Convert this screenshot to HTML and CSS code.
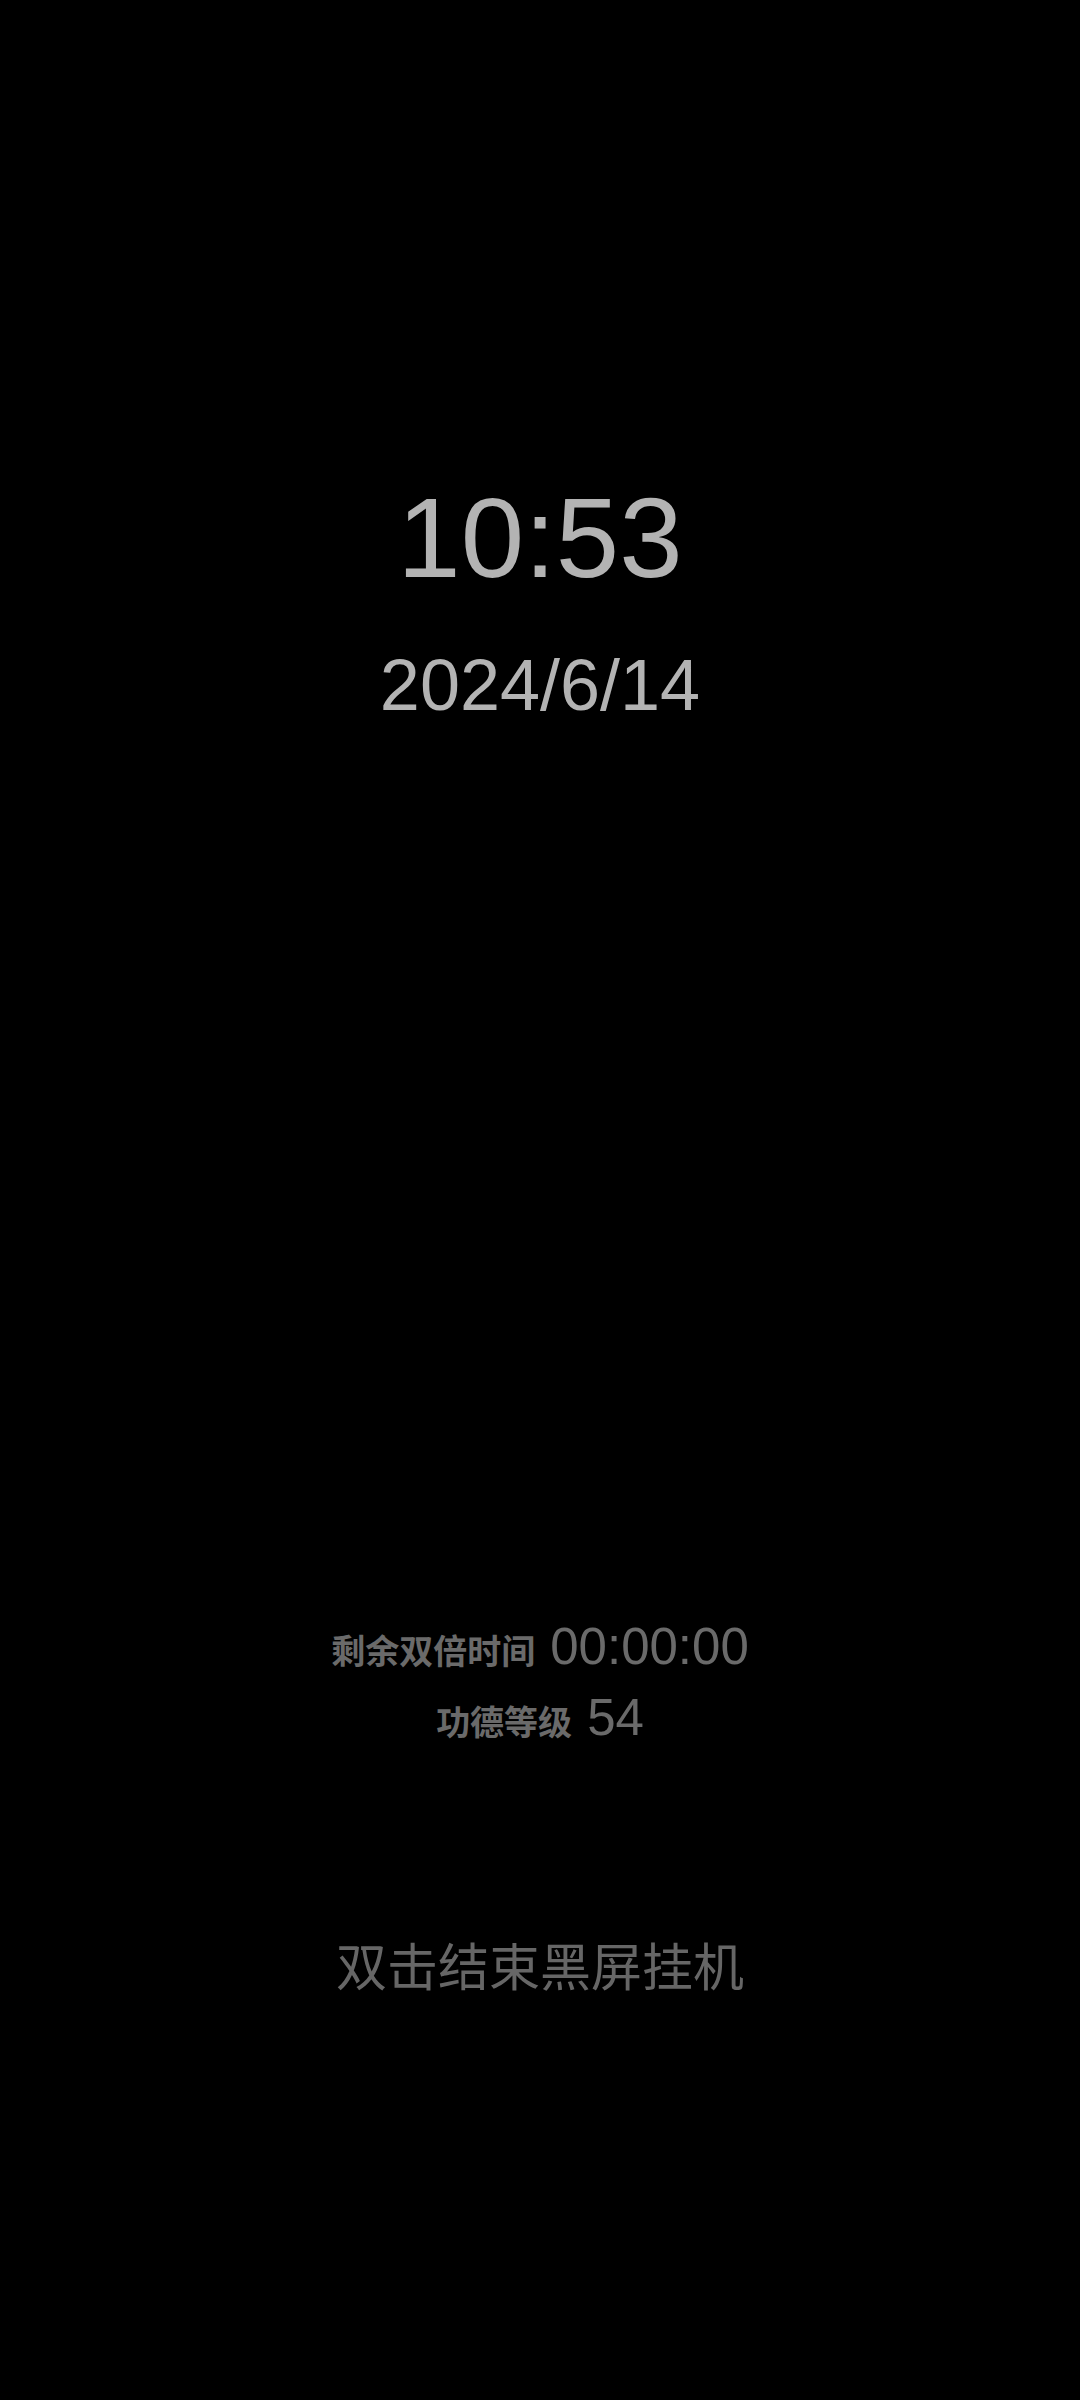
FILE: index.html
```html
<!DOCTYPE html>
<html lang="zh-CN">
<head>
<meta charset="utf-8">
<title>黑屏挂机</title>
<link rel="stylesheet" href="styles.css">
</head>
<body>
<main class="screen">
  <section class="clock">
    <div class="time">10:53</div>
    <div class="date">2024/6/14</div>
  </section>
  <section class="stats">
    <div class="stat-row">
      <span class="stat-label">剩余双倍时间</span>
      <span class="stat-value">00:00:00</span>
    </div>
    <div class="stat-row">
      <span class="stat-label">功德等级</span>
      <span class="stat-value">54</span>
    </div>
  </section>
  <div class="hint">双击结束黑屏挂机</div>
</main>
</body>
</html>
```

FILE: styles.css
```css
html, body {
  margin: 0;
  padding: 0;
  background: #000;
}
.screen {
  width: 1080px;
  height: 2400px;
  background: #000;
  display: flex;
  flex-direction: column;
  align-items: center;
  font-family: "Liberation Sans", "Noto Sans CJK SC", sans-serif;
}
.clock {
  padding-top: 481px;
  display: flex;
  flex-direction: column;
  align-items: center;
  color: #b3b3b3;
}
.time {
  font-size: 114px;
  line-height: 1;
}
.date {
  margin-top: 54px;
  font-size: 72px;
  line-height: 1;
}
.stats {
  margin-top: 900px;
  display: flex;
  flex-direction: column;
  align-items: center;
  gap: 20px;
  color: #6a6a6a;
}
.stat-row {
  display: flex;
  align-items: baseline;
  gap: 15px;
  line-height: 1;
}
.stat-label {
  font-family: "Noto Sans CJK SC", sans-serif;
  font-size: 34px;
  font-weight: 600;
}
.stat-value {
  font-size: 51px;
}
.hint {
  margin-top: 196px;
  font-family: "Noto Sans CJK SC", sans-serif;
  font-size: 51px;
  line-height: 1;
  color: #666;
}
```
